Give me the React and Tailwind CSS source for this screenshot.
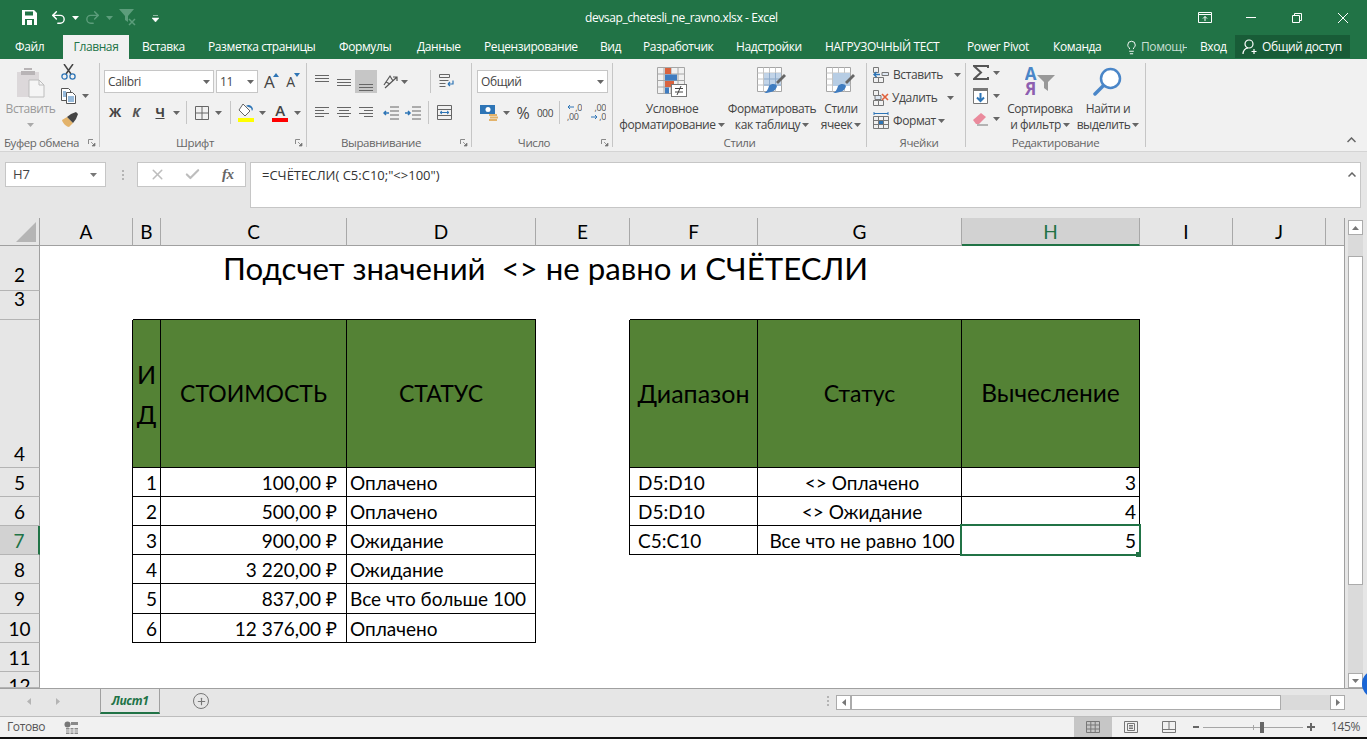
import React from "react";
import { Undo2, Redo2, Lightbulb, Check, X, Plus } from "lucide-react";

const COLS =
  "grid grid-cols-[40px_93px_28px_186px_189px_94px_128px_204px_178px_93px_93px_19px]";

const Caret = ({ className = "", color = "#666" }) => (
  <svg width="7" height="4" viewBox="0 0 7 4" className={"shrink-0 " + className}>
    <path d="M0 0h7L3.5 4z" fill={color} />
  </svg>
);

// horizontal text-alignment style icon
const Lines = ({ rows, w = 15 }) => (
  <svg width={w} height="14" viewBox={`0 0 ${w} 14`} className="shrink-0">
    {rows.map((r, i) => (
      <rect key={i} x={r[1]} y={r[0]} width={r[2]} height="1" fill="#666" />
    ))}
  </svg>
);

const Launcher = () => (
  <svg width="8" height="8" viewBox="0 0 8 8" className="absolute right-[3px] top-[4px]">
    <path d="M.5 5V.5H5" fill="none" stroke="#8a8a8a" />
    <path d="M3 3l3 3M7 4v3H4z" fill="#777" stroke="#777" strokeWidth=".7" />
  </svg>
);

const GroupLabel = ({ children, launcher, className = "" }) => (
  <div className="relative mt-auto -mb-1 h-4 shrink-0 text-center text-[11.5px] leading-4 text-[#666]">
    <div className={className}>{children}</div>
    {launcher && <Launcher />}
  </div>
);

const Sep = ({ className = "" }) => <div className={"w-px h-[23px] bg-[#c6c6c6] shrink-0 " + className} />;

const GridIcon = ({ children }) => (
  <svg width="30" height="30" viewBox="0 0 30 30" className="shrink-0">
    {children}
  </svg>
);

const PasteIcon = () => (
  <svg width="29" height="31" viewBox="0 0 29 31">
    <path d="M1 5h22v25H1z" fill="#dcd8da" />
    <path d="M8 3h8V1h-8zM5 4h14v4H5z" fill="#b8b4b6" />
    <path d="M13 13h10l5 5v12H13z" fill="#f5f5f5" stroke="#bdbdbd" />
    <path d="M23 13v5h5" fill="none" stroke="#bdbdbd" />
  </svg>
);

const ScissorsIcon = () => (
  <svg width="15" height="16" viewBox="0 0 15 16">
    <path d="M3 0l7 10M12 0L5 10" stroke="#444" strokeWidth="1.500" />
    <circle cx="3.500" cy="12.500" r="2.600" fill="none" stroke="#2e75b6" strokeWidth="1.300" />
    <circle cx="11.500" cy="12.500" r="2.600" fill="none" stroke="#2e75b6" strokeWidth="1.300" />
  </svg>
);

const CopyIcon = () => (
  <svg width="16" height="16" viewBox="0 0 16 16">
    <path d="M.5.5h7l2 2v10h-9z" fill="#fff" stroke="#555" />
    <path d="M5.500 4.500h6l3 3v8h-9z" fill="#fff" stroke="#555" />
    <path d="M7 9h6M7 11h6M7 13h6M2 4h3M2 6h3M2 8h3" stroke="#2e75b6" />
  </svg>
);

const BrushIcon = () => (
  <svg width="17" height="15" viewBox="0 0 17 15">
    <path d="M1 8l5-3 6 6-4 4c-2 0-6-3-7-7z" fill="#e3b36b" />
    <path d="M6 5l4-3 5-2 2 2-2 5-3 4z" fill="#444" />
  </svg>
);

const FillIcon = () => (
  <svg width="16" height="19" viewBox="0 0 16 19">
    <path d="M5 1l7 7-5 5-6-6z" fill="#fff" stroke="#666" />
    <path d="M8 3c2-2 6-1 7 3l-1 2-1-3z" fill="#2e75b6" />
    <rect x="0" y="15" width="16" height="4" fill="#ffff00" />
  </svg>
);

const BordersIcon = () => (
  <svg width="14" height="14" viewBox="0 0 14 14">
    <path d="M.5.5h13v13H.5zM7 .5v13M.5 7h13" fill="none" stroke="#666" />
  </svg>
);

const CondIcon = () => (
  <GridIcon>
    <path d="M.5.5h27v26H.5zM.5 7h27M.5 13.500h27M.5 20h27M7 .5v26M14 .5v26M21 .5v26" fill="none" stroke="#a6a6a6" />
    <rect x="8" y="1" width="6" height="6" fill="#d9633f" />
    <rect x="8" y="7.500" width="12" height="6" fill="#3f7cc0" />
    <rect x="8" y="14" width="9" height="6" fill="#d9633f" />
    <rect x="8" y="20.500" width="4" height="6" fill="#3f7cc0" />
    <rect x="14.500" y="17.500" width="15" height="12" fill="#fff" stroke="#777" />
    <path d="M18 21.500h8M18 25h8M24 19l-4 9" stroke="#444" />
  </GridIcon>
);

const TableIcon = ({ full }) => (
  <GridIcon>
    <path d="M.5.5h24v24H.5z" fill="#fff" stroke="#a6a6a6" />
    <path d="M.5 6h24M.5 12h24M.5 18h24M6.500.5v24M12.500.5v24M18.500.5v24" stroke="#c4c4c4" />
    {full ? (
      <rect x="7" y="6" width="17" height="13" fill="#b7cde4" />
    ) : (
      <>
        <rect x="7" y="6" width="17" height="13" fill="#b7cde4" opacity=".85" />
        <path d="M7 12h17M7 18h17M12.500 6v13M18.500 6v13" stroke="#8faccc" />
      </>
    )}
    <path d="M19 15l8-8 2 2-8 8z" fill="#666" />
    <path d="M12 19c3-3 7-2 8 0-1 5-6 7-13 7 3-1 4-4 5-7z" fill="#3f7cc0" />
  </GridIcon>
);

const InsertIcon = () => (
  <svg width="16" height="16" viewBox="0 0 16 16">
    <path d="M.5.5h5v5h-5zM.5 10.500h5v5h-5zM5.500 10.500h5v5h-5z" fill="none" stroke="#777" />
    <path d="M9 5.500h6.500v3H9z" fill="#dfe8f3" stroke="#777" />
    <path d="M1 7.500h6M3.500 5l-2.500 2.500L3.500 10" fill="none" stroke="#2e75b6" strokeWidth="1.500" />
  </svg>
);

const DeleteIcon = () => (
  <svg width="16" height="16" viewBox="0 0 16 16">
    <path d="M.5.5h5v5h-5zM.5 10.500h5v5h-5zM5.500 10.500h5v5h-5z" fill="none" stroke="#777" />
    <path d="M2 5.500h6v4H2z" fill="#dfe8f3" stroke="#777" />
    <path d="M9 4l6 6M15 4l-6 6" stroke="#e0603a" strokeWidth="1.600" />
  </svg>
);

const FormatIcon = () => (
  <svg width="16" height="17" viewBox="0 0 16 17">
    <path d="M.5 4.500h15v12H.5zM.5 8.500h15M.5 12.500h15M5.500 4.500v12M10.500 4.500v12" fill="none" stroke="#777" />
    <rect x="6" y="9" width="4" height="3" fill="#2e75b6" />
    <path d="M1 1.500h14M1 0v3M15 0v3" stroke="#2e75b6" />
  </svg>
);

const Row = ({ className = "", children }) => <div className={COLS + " " + className}>{children}</div>;

const RowHead = ({ n, sel, className = "" }) => (
  <div
    className={
      "flex justify-center border-b border-[#b4b4b4] " +
      (sel
        ? "bg-[#d2d2d2] text-[#217346] border-r-2 border-r-[#217346] "
        : "bg-[#e6e6e6] text-black border-r border-r-[#a0a0a0] ") +
      className
    }
  >
    {n}
  </div>
);

const leftRows = [
  ["1", "100,00 ₽", "Оплачено"],
  ["2", "500,00 ₽", "Оплачено"],
  ["3", "900,00 ₽", "Ожидание"],
  ["4", "3 220,00 ₽", "Ожидание"],
  ["5", "837,00 ₽", "Все что больше 100"],
  ["6", "12 376,00 ₽", "Оплачено"],
];

const rightRows = [
  ["D5:D10", "<> Оплачено", "3"],
  ["D5:D10", "<> Ожидание", "4"],
  ["C5:C10", "Все что не равно 100", "5"],
];

const colHeads = ["A", "B", "C", "D", "E", "F", "G", "H", "I", "J"];

const tabs = [
  ["Файл", "w-[63px] pl-[15px]"],
  ["Главная", "w-[66px] justify-center bg-[#f1f1f1] !text-[#217346]"],
  ["Вставка", "w-[79px] pl-[13px]"],
  ["Разметка страницы", "w-[131px]"],
  ["Формулы", "w-[78px]"],
  ["Данные", "w-[67px]"],
  ["Рецензирование", "w-[116px]"],
  ["Вид", "w-[43px]"],
  ["Разработчик", "w-[93px]"],
  ["Надстройки", "w-[89px]"],
  ["НАГРУЗОЧНЫЙ ТЕСТ", "w-[142px]"],
  ["Power Pivot", "w-[86px]"],
  ["Команда", "w-[70px]"],
];

const App = () => {
  return (
    <div className="relative flex h-[739px] w-[1367px] flex-col overflow-hidden bg-[#e6e6e6] font-['Open_Sans','Noto_Sans',sans-serif] text-[12px] tracking-[-0.4px]">
      {/* title bar */}
      <div className="flex h-[35px] shrink-0 items-center bg-[#217346] text-white">
        <div className="flex w-[585px] items-center pl-[22px]">
          <svg width="15" height="15" viewBox="0 0 15 15">
            <path d="M0 0h12l3 3v12H0z" fill="#fff" />
            <rect x="3" y="1.500" width="8" height="4" fill="#217346" />
            <rect x="3" y="9" width="9" height="6" fill="#217346" />
            <rect x="5" y="10" width="5" height="5" fill="#fff" />
          </svg>
          <Undo2 size={17} strokeWidth={2} className="ml-[13px]" />
          <Caret color="#fff" className="ml-[5px]" />
          <Redo2 size={17} strokeWidth={2} color="#5c9d7b" className="ml-[5px]" />
          <Caret color="#5c9d7b" className="ml-[5px]" />
          <svg width="18" height="18" viewBox="0 0 18 18" className="ml-[6px]">
            <path d="M0 0h15L9 7v6L6 11V7z" fill="#5c9d7b" />
            <path d="M10 10l6 6M16 10l-6 6" stroke="#5c9d7b" strokeWidth="1.500" />
          </svg>
          <svg width="7" height="7" viewBox="0 0 7 7" className="ml-[15px] mt-[2px]">
            <path d="M1 .5h5M0 3h7L3.500 7z" fill="#fff" stroke="#fff" strokeWidth=".5" />
          </svg>
        </div>
        <div className="whitespace-nowrap">devsap_chetesli_ne_ravno.xlsx - Excel</div>
        <div className="ml-auto flex items-center pr-[19px]">
          <svg width="14" height="11" viewBox="0 0 14 11">
            <path d="M.5 2.500h13v8H.5zM.5.5h13v2H.5zM7 9V4.500M5 6.500l2-2 2 2" fill="none" stroke="#fff" />
          </svg>
          <div className="ml-[34px] h-px w-[10px] bg-white" />
          <svg width="10" height="10" viewBox="0 0 10 10" className="ml-[36px]">
            <path d="M.5 2.500h7v7h-7zM2.500 2.500v-2h7v7h-2" fill="none" stroke="#fff" />
          </svg>
          <svg width="10" height="10" viewBox="0 0 10 10" className="ml-[36px]">
            <path d="M0 0l10 10M10 0L0 10" stroke="#fff" />
          </svg>
        </div>
      </div>

      {/* tabs */}
      <div className="flex h-[24px] shrink-0 items-stretch bg-[#217346] text-white">
        {tabs.map(([label, cls]) => (
          <div key={label} className={"flex items-center whitespace-nowrap " + cls}>
            {label}
          </div>
        ))}
        <div className="flex w-[64px] items-center overflow-hidden">
          <Lightbulb size={15} strokeWidth={1.5} className="ml-[1px] shrink-0" />
          <span className="ml-[2px] whitespace-nowrap text-[#c8dfd3]">Помощник</span>
        </div>
        <div className="ml-[13px] flex w-[34px] items-center whitespace-nowrap">Вход</div>
        <div className="ml-[1px] flex h-[23px] w-[115px] items-center bg-[#185c37] pl-[7px]">
          <svg width="16" height="16" viewBox="0 0 16 16" className="shrink-0">
            <circle cx="7" cy="5" r="4" fill="none" stroke="#fff" strokeWidth="1.200" />
            <path d="M1 15c0-3 2-6 5-6M12 10v5M9.500 12.500h5" fill="none" stroke="#fff" strokeWidth="1.200" />
          </svg>
          <span className="ml-[4px] whitespace-nowrap">Общий доступ</span>
        </div>
      </div>

      {/* ribbon */}
      <div className="flex h-[93px] shrink-0 items-start border-b border-[#d4d4d4] bg-[#f1f1f1] pt-[4px] text-[#444]">
        {/* clipboard */}
        <div className="flex h-[84px] w-[100px] shrink-0 flex-col border-r border-[#c6c6c6]">
          <div className="flex">
            <div className="flex w-[61px] flex-col items-center pt-[4px] text-[#9a9a9a]">
              <PasteIcon />
              <div className="mt-[2px] leading-[17px]">Вставить</div>
              <Caret color="#aaa" className="mt-[6px]" />
            </div>
            <div className="flex flex-col pt-[1px]">
              <ScissorsIcon />
              <div className="mt-[8px] flex items-center">
                <CopyIcon />
                <Caret className="ml-[5px]" />
              </div>
              <div className="mt-[8px]">
                <BrushIcon />
              </div>
            </div>
          </div>
          <GroupLabel launcher className="pr-[16px]">
            Буфер обмена
          </GroupLabel>
        </div>

        {/* font */}
        <div className="flex h-[84px] w-[207px] shrink-0 flex-col border-r border-[#c6c6c6] pl-[4px] pt-[7px]">
          <div className="flex h-[23px] items-center">
            <div className="flex h-[23px] w-[110px] items-center justify-between border border-[#c6c6c6] bg-white pl-[3px] pr-[3px]">
              <span>Calibri</span>
              <Caret />
            </div>
            <div className="ml-[2px] flex h-[23px] w-[42px] items-center justify-between border border-[#c6c6c6] bg-white pl-[3px] pr-[3px]">
              <span>11</span>
              <Caret />
            </div>
            <div className="relative ml-[6px] text-[17px] leading-none">
              А
              <svg width="6" height="4" viewBox="0 0 6 4" className="absolute -right-[5px] top-0">
                <path d="M0 4l3-4 3 4z" fill="#2e75b6" />
              </svg>
            </div>
            <div className="relative ml-[12px] text-[14px] leading-none">
              А
              <svg width="6" height="4" viewBox="0 0 6 4" className="absolute -right-[5px] -top-[2px]">
                <path d="M0 0l3 4 3-4z" fill="#2e75b6" />
              </svg>
            </div>
          </div>
          <div className="mt-[8px] flex h-[23px] items-center">
            <div className="w-[22px] text-center text-[13px] font-bold">Ж</div>
            <div className="w-[20px] text-center text-[13px] font-bold italic text-[#555]">К</div>
            <div className="ml-[2px] w-[24px] text-center text-[13px] font-bold underline">Ч</div>
            <Caret className="ml-[1px]" />
            <Sep className="ml-[6px]" />
            <div className="ml-[8px]">
              <BordersIcon />
            </div>
            <Caret className="ml-[6px]" />
            <Sep className="ml-[8px]" />
            <div className="ml-[7px]">
              <FillIcon />
            </div>
            <Caret className="ml-[5px]" />
            <div className="relative ml-[6px] h-[19px] w-[16px] text-center text-[15px] font-semibold leading-[15px]">
              А
              <div className="absolute bottom-0 h-[4px] w-[16px] bg-[#ff0000]" />
            </div>
            <Caret className="ml-[6px]" />
          </div>
          <GroupLabel launcher className="pr-[20px]">
            Шрифт
          </GroupLabel>
        </div>

        {/* alignment */}
        <div className="flex h-[84px] w-[165px] shrink-0 flex-col border-r border-[#c6c6c6] pt-[7px]">
          <div className="flex h-[23px] items-center">
            <div className="ml-[8px]">
              <Lines rows={[[0, 0, 14], [3, 0, 14], [6, 0, 14]]} />
            </div>
            <div className="ml-[7px]">
              <Lines rows={[[4, 0, 14], [7, 0, 14], [10, 0, 14]]} />
            </div>
            <div className="ml-[3px] flex h-[23px] w-[22px] items-end justify-center bg-[#c6c6c6] pb-[1px]">
              <Lines rows={[[6, 0, 14], [9, 0, 14], [12, 0, 14]]} />
            </div>
            <svg width="15" height="15" viewBox="0 0 15 15" className="ml-[6px]">
              <path d="M1 11L7 2l3 5M3 8l4 2M2 14L14 3M10 3h4v4" fill="none" stroke="#555" strokeWidth="1.200" />
            </svg>
            <Caret className="ml-[3px]" />
            <Sep className="ml-[22px]" />
            <svg width="15" height="15" viewBox="0 0 15 15" className="ml-[8px]">
              <path d="M.5.5h10v3H.5zM.5 6.500h9M.5 9.500h6M.5 12.500h6" fill="none" stroke="#666" />
              <path d="M9 10h5V6.500M9 10l2-2M9 10l2 2" fill="none" stroke="#2e75b6" strokeWidth="1.200" />
            </svg>
          </div>
          <div className="mt-[8px] flex h-[23px] items-center">
            <div className="ml-[8px]">
              <Lines rows={[[1, 0, 14], [4, 0, 9], [7, 0, 14], [10, 0, 9]]} />
            </div>
            <div className="ml-[7px]">
              <Lines rows={[[1, 0, 14], [4, 2, 10], [7, 0, 14], [10, 2, 10]]} />
            </div>
            <div className="ml-[7px]">
              <Lines rows={[[1, 0, 14], [4, 5, 9], [7, 0, 14], [10, 5, 9]]} />
            </div>
            <svg width="16" height="14" viewBox="0 0 16 14" className="ml-[9px]">
              <path d="M7 1h9M7 5h9M7 9h9M7 13h9" stroke="#666" />
              <path d="M6 5H1M3 3L1 5l2 2" transform="translate(0 2)" fill="none" stroke="#2e75b6" strokeWidth="1.500" />
            </svg>
            <svg width="16" height="14" viewBox="0 0 16 14" className="ml-[6px]">
              <path d="M7 1h9M7 5h9M7 9h9M7 13h9" stroke="#666" />
              <path d="M0 5h5M3 3l2 2-2 2" transform="translate(0 2)" fill="none" stroke="#2e75b6" strokeWidth="1.500" />
            </svg>
            <Sep className="ml-[7px]" />
            <svg width="15" height="15" viewBox="0 0 15 15" className="ml-[8px]">
              <path d="M.5.5h14v14H.5zM.5 4.500h14M.5 10.500h14" fill="none" stroke="#666" />
              <path d="M3 7.500h9M3 7.500l2-1.500M3 7.500l2 1.500M12 7.500l-2-1.500M12 7.500l-2 1.500" fill="none" stroke="#2e75b6" />
            </svg>
          </div>
          <GroupLabel launcher className="pr-[16px]">
            Выравнивание
          </GroupLabel>
        </div>

        {/* number */}
        <div className="flex h-[84px] w-[141px] shrink-0 flex-col border-r border-[#c6c6c6] pt-[7px]">
          <div className="ml-[5px] flex h-[23px] w-[131px] items-center justify-between border border-[#c6c6c6] bg-white pl-[3px] pr-[3px]">
            <span>Общий</span>
            <Caret />
          </div>
          <div className="mt-[8px] flex h-[23px] items-center">
            <svg width="18" height="17" viewBox="0 0 18 17" className="ml-[8px]">
              <rect x="0" y="1" width="15" height="9" fill="#2e75b6" />
              <circle cx="8" cy="5.500" r="2.500" fill="#fff" />
              <rect x="9" y="10" width="8" height="2" fill="#e3b36b" />
              <rect x="10" y="12.500" width="8" height="2" fill="#e3b36b" />
              <rect x="9" y="15" width="8" height="2" fill="#e3b36b" />
            </svg>
            <Caret className="ml-[5px]" />
            <div className="ml-[6px] w-[14px] text-center text-[16px] leading-none">%</div>
            <div className="ml-[7px] w-[15px] text-center text-[10px] leading-none">000</div>
            <Sep className="ml-[7px]" />
            <svg width="15" height="19" viewBox="0 0 15 19" className="ml-[7px] text-[9px]" fill="#555">
              <path d="M7 4H1M3 2L1 4l2 2" fill="none" stroke="#2e75b6" />
              <text x="15" y="8" textAnchor="end">,0</text>
              <text x="0" y="17">,00</text>
            </svg>
            <svg width="15" height="19" viewBox="0 0 15 19" className="ml-[9px] text-[9px]" fill="#555">
              <text x="15" y="8" textAnchor="end">,00</text>
              <path d="M0 14h6M4 12l2 2-2 2" fill="none" stroke="#2e75b6" />
              <text x="15" y="17" textAnchor="end">,0</text>
            </svg>
          </div>
          <GroupLabel launcher className="pr-[16px]">
            Число
          </GroupLabel>
        </div>

        {/* styles */}
        <div className="flex h-[84px] w-[254px] shrink-0 flex-col border-r border-[#c6c6c6]">
          <div className="flex pt-[4px] leading-[16px]">
            <div className="ml-[5px] flex w-[108px] flex-col items-center">
              <CondIcon />
              <div className="mt-[4px]">Условное</div>
              <div className="flex items-center whitespace-nowrap">
                форматирование
                <Caret className="ml-[2px]" />
              </div>
            </div>
            <div className="flex w-[92px] flex-col items-center">
              <TableIcon />
              <div className="mt-[4px] whitespace-nowrap">Форматировать</div>
              <div className="flex items-center whitespace-nowrap">
                как таблицу
                <Caret className="ml-[2px]" />
              </div>
            </div>
            <div className="flex w-[46px] flex-col items-center">
              <TableIcon full />
              <div className="mt-[4px]">Стили</div>
              <div className="flex items-center whitespace-nowrap">
                ячеек
                <Caret className="ml-[2px]" />
              </div>
            </div>
          </div>
          <GroupLabel>Стили</GroupLabel>
        </div>

        {/* cells */}
        <div className="flex h-[84px] w-[99px] shrink-0 flex-col border-r border-[#c6c6c6] pl-[6px]">
          <div className="flex h-[23px] items-center">
            <InsertIcon />
            <span className="ml-[4px]">Вставить</span>
            <Caret className="ml-[11px]" />
          </div>
          <div className="flex h-[23px] items-center">
            <DeleteIcon />
            <span className="ml-[3px]">Удалить</span>
            <Caret className="ml-[10px]" />
          </div>
          <div className="flex h-[23px] items-center">
            <FormatIcon />
            <span className="ml-[4px]">Формат</span>
            <Caret className="ml-[2px]" />
          </div>
          <GroupLabel>Ячейки</GroupLabel>
        </div>

        {/* editing */}
        <div className="flex h-[84px] w-[180px] shrink-0 flex-col border-r border-[#c6c6c6]">
          <div className="flex">
            <div className="flex w-[35px] flex-col pl-[7px] pt-[2px]">
              <div className="flex items-center">
                <svg width="16" height="15" viewBox="0 0 16 15">
                  <path d="M15 3V1H1l7 6.500L1 14h14v-2" fill="none" stroke="#555" strokeWidth="2" />
                </svg>
                <Caret className="ml-[4px]" />
              </div>
              <div className="mt-[8px] flex items-center">
                <svg width="15" height="16" viewBox="0 0 15 16">
                  <path d="M.5.5h14v15H.5z" fill="#fff" stroke="#777" />
                  <rect x="0" y="0" width="15" height="3" fill="#777" />
                  <path d="M7.500 5v8M4 9.500l3.500 3.500L11 9.500" fill="none" stroke="#2e75b6" strokeWidth="2" />
                </svg>
                <Caret className="ml-[5px]" />
              </div>
              <div className="mt-[8px] flex items-center">
                <svg width="15" height="14" viewBox="0 0 15 14">
                  <path d="M0 8l8-7 5 4-7 7H3z" fill="#ea8a9c" />
                  <path d="M4 13h11" stroke="#777" />
                </svg>
                <Caret className="ml-[5px]" />
              </div>
            </div>
            <div className="flex w-[78px] flex-col items-center pt-[4px] leading-[16px]">
              <svg width="30" height="30" viewBox="0 0 30 30" className="text-[17px] font-bold">
                <text x="5.500" y="13" textAnchor="middle" fill="#4a86c8">А</text>
                <text x="5.500" y="28" textAnchor="middle" fill="#8e5fb0">Я</text>
                <path d="M12 8h18l-7 7v9l-4-3v-6z" fill="#999" />
              </svg>
              <div className="mt-[4px] whitespace-nowrap">Сортировка</div>
              <div className="flex items-center whitespace-nowrap">
                и фильтр
                <Caret className="ml-[2px]" />
              </div>
            </div>
            <div className="flex w-[58px] flex-col items-center pt-[4px] leading-[16px]">
              <svg width="30" height="30" viewBox="0 0 30 30">
                <circle cx="17.500" cy="11.500" r="9.500" fill="#fff" stroke="#4a86c8" strokeWidth="2.500" />
                <path d="M10 19L2 27" stroke="#4a86c8" strokeWidth="3.500" strokeLinecap="round" />
              </svg>
              <div className="mt-[4px] whitespace-nowrap">Найти и</div>
              <div className="flex items-center whitespace-nowrap">
                выделить
                <Caret className="ml-[2px]" />
              </div>
            </div>
          </div>
          <GroupLabel>Редактирование</GroupLabel>
        </div>

        <svg width="9" height="6" viewBox="0 0 9 6" className="ml-[201px] mt-[74px] shrink-0">
          <path d="M.5 5l4-4 4 4" fill="none" stroke="#666" strokeWidth="1.500" />
        </svg>
      </div>

      {/* formula bar */}
      <div className="flex h-[66px] shrink-0 items-start bg-[#e6e6e6] pt-[10px] text-[#444]">
        <div className="ml-[5px] flex h-[25px] w-[101px] items-center justify-between border border-[#c6c6c6] bg-white pl-[7px] pr-[8px] text-[13px] tracking-normal">
          <span>H7</span>
          <Caret color="#777" />
        </div>
        <div className="ml-[15px] flex h-[25px] w-[3px] flex-col items-center justify-center gap-[2px]">
          <div className="h-[2px] w-[2px] bg-[#b4b4b4]" />
          <div className="h-[2px] w-[2px] bg-[#b4b4b4]" />
          <div className="h-[2px] w-[2px] bg-[#b4b4b4]" />
        </div>
        <div className="ml-[13px] flex h-[25px] w-[109px] items-center border border-[#c6c6c6] bg-white">
          <X size={17} color="#bdbdbd" strokeWidth={2.2} className="ml-[11px]" />
          <Check size={17} color="#bdbdbd" strokeWidth={3} className="ml-[18px]" />
          <span className="ml-[21px] font-['Liberation_Serif',serif] text-[15px] font-bold italic text-[#666]">fx</span>
        </div>
        <div className="ml-[4px] flex h-[46px] w-[1111px] items-start justify-between border border-[#c6c6c6] bg-white pl-[11px] pr-[4px] pt-[3px]">
          <span className="whitespace-nowrap text-[13px] tracking-normal text-[#333]">=СЧЁТЕСЛИ( C5:C10;"&lt;&gt;100")</span>
          <svg width="8" height="5" viewBox="0 0 8 5" className="mt-[6px]">
            <path d="M.5 4.500l3.500-3.500 3.500 3.500" fill="none" stroke="#666" strokeWidth="1.500" />
          </svg>
        </div>
      </div>

      {/* sheet */}
      <div className="flex h-[470px] shrink-0">
        <div className="h-[470px] w-[1345px] shrink-0 overflow-hidden border-r border-[#a0a0a0] bg-white font-['Lato','Noto_Sans',sans-serif] text-[19px] tracking-normal text-black">
          <Row className="h-[28px] leading-[28px]">
            <div className="flex items-end justify-end border-b border-r border-[#a0a0a0] bg-[#e6e6e6] pb-[3px] pr-[3px]">
              <svg width="20" height="20" viewBox="0 0 20 20">
                <path d="M20 0v20H0z" fill="#b5b5b5" />
              </svg>
            </div>
            {colHeads.map((c) => (
              <div
                key={c}
                className={
                  "h-[28px] text-center border-r border-r-[#a8a8a8] " +
                  (c === "H"
                    ? "border-b-2 border-b-[#217346] bg-[#d2d2d2] text-[#217346]"
                    : "border-b border-b-[#a0a0a0] bg-[#e6e6e6]")
                }
              >
                {c}
              </div>
            ))}
            <div className="border-b border-[#a0a0a0] bg-[#e6e6e6]" />
          </Row>

          {/* row 2 */}
          <Row className="h-[45px]">
            <RowHead n="2" className="items-end pb-[1px]" />
            <div className="col-span-2" />
            <div className="col-span-5 whitespace-pre pl-[62px] text-[31.2px] leading-[44px]">
              Подсчет значений  &lt;&gt; не равно и СЧЁТЕСЛИ
            </div>
          </Row>

          {/* row 3 */}
          <Row className="h-[29px]">
            <RowHead n="3" className="items-start leading-[16px]" />
            <div />
            <div className="border-b border-black" />
            <div className="border-b border-black" />
            <div className="border-b border-black" />
            <div />
            <div className="border-b border-black" />
            <div className="border-b border-black" />
            <div className="border-b border-black" />
          </Row>

          {/* row 4: table heads */}
          <Row className="h-[148px] text-[23px]">
            <RowHead n="4" className="items-end text-[19px] leading-[27px]" />
            <div className="border-r border-black" />
            <div className="flex items-center justify-center border-b border-r border-black bg-[#548235] text-center text-[25px] leading-[40px]">
              <span className="w-[20px] break-all">ИД</span>
            </div>
            <div className="flex items-center justify-center border-b border-r border-black bg-[#548235]">СТОИМОСТЬ</div>
            <div className="flex items-center justify-center border-b border-r border-black bg-[#548235]">СТАТУС</div>
            <div className="border-r border-black" />
            <div className="flex items-center justify-center border-b border-r border-black bg-[#548235] text-[25px]">Диапазон</div>
            <div className="flex items-center justify-center border-b border-r border-black bg-[#548235]">Статус</div>
            <div className="flex items-center justify-center border-b border-r border-black bg-[#548235] text-[24.5px]">Вычесление</div>
          </Row>

          {/* rows 5-10 */}
          {leftRows.map((r, i) => {
            const right = rightRows[i];
            return (
              <Row key={r[0]} className={i === 4 ? "h-[30px] leading-[28px]" : "h-[29px] leading-[27px]"}>
                <RowHead n={String(i + 5)} sel={i === 2} className="pt-px" />
                <div className="border-r border-black" />
                <div className="border-b border-r border-black pr-[3px] pt-px text-right">{r[0]}</div>
                <div className="whitespace-pre border-b border-r border-black pr-[9px] pt-px text-right">{r[1]}</div>
                <div className="whitespace-nowrap border-b border-r border-black pl-[3px] pt-px">{r[2]}</div>
                <div className={right ? "border-r border-black" : ""} />
                {right && (
                  <>
                    <div className="border-b border-r border-black pl-[8px] pt-px">{right[0]}</div>
                    <div className="whitespace-nowrap border-b border-r border-black pl-[5px] pt-px text-center">{right[1]}</div>
                    <div className="relative border-b border-r border-black pr-[3px] pt-px text-right">
                      {right[2]}
                      {i === 2 && (
                        <>
                          <div className="absolute -bottom-[2px] -left-[2px] -right-[2px] -top-[2px] border-2 border-[#217346]" />
                          <div className="absolute -bottom-[3px] -right-[2px] h-[5px] w-[5px] bg-[#217346]" />
                        </>
                      )}
                    </div>
                  </>
                )}
              </Row>
            );
          })}

          <Row className="h-[29px] leading-[27px]">
            <RowHead n="11" className="pt-px" />
          </Row>
          <Row className="h-[16px] leading-[28px]">
            <RowHead n="12" className="overflow-hidden" />
          </Row>
        </div>

        {/* vertical scrollbar */}
        <div className="flex w-[22px] shrink-0 flex-col items-center bg-[#e6e6e6] pr-[1px] pt-[2px]">
          <div className="flex h-[15px] w-[15px] shrink-0 items-center justify-center border border-[#ababab] bg-white">
            <svg width="7" height="4" viewBox="0 0 7 4">
              <path d="M0 4h7L3.500 0z" fill="#777" />
            </svg>
          </div>
          <div className="flex w-[15px] flex-1 flex-col bg-[#dadada]">
            <div className="mt-[21px] h-[329px] border border-[#ababab] bg-white" />
          </div>
          <div className="flex h-[15px] w-[15px] shrink-0 items-center justify-center border border-[#ababab] bg-white">
            <Caret color="#777" />
          </div>
        </div>
      </div>

      {/* sheet tabs */}
      <div className="flex h-[29px] shrink-0 border-b border-t border-b-[#bdbdbd] border-t-[#a0a0a0] bg-[#e6e6e6]">
        <div className="flex w-[100px] items-center pb-[3px]">
          <svg width="4" height="7" viewBox="0 0 4 7" className="ml-[27px]">
            <path d="M4 0v7L0 3.500z" fill="#b4b4b4" />
          </svg>
          <svg width="4" height="7" viewBox="0 0 4 7" className="ml-[25px]">
            <path d="M0 0v7l4-3.500z" fill="#b4b4b4" />
          </svg>
        </div>
        <div className="flex h-[25px] w-[60px] items-center justify-center border-x border-b-2 border-x-[#a0a0a0] border-b-[#217346] text-[12px] font-bold italic text-[#217346]">
          Лист1
        </div>
        <div className="flex w-[660px] items-center pb-[3px]">
          <div className="ml-[33px] flex h-[16px] w-[16px] items-center justify-center rounded-full border border-[#777]">
            <Plus size={11} color="#777" strokeWidth={2.5} />
          </div>
        </div>
        <div className="flex items-start pt-[6px]">
          <div className="flex h-[14px] w-[16px] flex-col items-center gap-[2px] pt-[1px]">
            <div className="h-[2px] w-[2px] bg-[#b4b4b4]" />
            <div className="h-[2px] w-[2px] bg-[#b4b4b4]" />
            <div className="h-[2px] w-[2px] bg-[#b4b4b4]" />
          </div>
          <div className="flex h-[15px] w-[15px] items-center justify-center border border-[#ababab] bg-white">
            <svg width="4" height="7" viewBox="0 0 4 7">
              <path d="M4 0v7L0 3.500z" fill="#777" />
            </svg>
          </div>
          <div className="h-[15px] w-[430px] border border-[#ababab] bg-white" />
          <div className="h-[15px] w-[49px] bg-[#dadada]" />
          <div className="flex h-[15px] w-[15px] items-center justify-center border border-[#ababab] bg-white">
            <svg width="4" height="7" viewBox="0 0 4 7">
              <path d="M0 0v7l4-3.500z" fill="#777" />
            </svg>
          </div>
        </div>
      </div>

      {/* status bar */}
      <div className="flex h-[20px] shrink-0 items-center bg-[#f1f1f1] text-[#555]">
        <span className="ml-[7px] w-[37px]">Готово</span>
        <svg width="14" height="13" viewBox="0 0 14 13" className="ml-[20px]">
          <circle cx="3.500" cy="3.500" r="3" fill="#777" />
          <path d="M7 1h7v3H7zM2 7h12v6H2z" fill="#8a8a8a" />
          <path d="M2 9h12M2 11h12M6 7v6M10 7v6" stroke="#f1f1f1" />
        </svg>
        <div className="ml-[996px] flex h-[20px] w-[38px] items-center justify-center bg-[#c6c6c6]">
          <svg width="14" height="12" viewBox="0 0 14 12">
            <path d="M.5.5h13v11H.5zM.5 4h13M.5 8h13M4.800.5v11M9.200.5v11" fill="none" stroke="#777" />
          </svg>
        </div>
        <svg width="14" height="12" viewBox="0 0 14 12" className="ml-[12px]">
          <path d="M.5.5h13v11H.5zM3.500 2.500h7v7h-7zM5 4.500h4M5 6h4M5 7.500h4" fill="none" stroke="#777" />
        </svg>
        <svg width="14" height="12" viewBox="0 0 14 12" className="ml-[24px]">
          <path d="M.5 11.500V.5h13v11zM.5 8.500h13M7 .5v8" fill="none" stroke="#777" />
        </svg>
        <div className="ml-[17px] h-[2px] w-[6px] bg-[#666]" />
        <div className="relative ml-[4px] h-px w-[100px] bg-[#a6a6a6]">
          <div className="absolute left-[50px] -top-[2px] h-[5px] w-px bg-[#a6a6a6]" />
          <div className="absolute left-[57px] -top-[5px] h-[11px] w-[4px] bg-[#666]" />
        </div>
        <svg width="8" height="8" viewBox="0 0 8 8" className="ml-[4px]">
          <path d="M0 4h8M4 0v8" stroke="#666" strokeWidth="2" />
        </svg>
        <span className="ml-[16px] whitespace-nowrap">145%</span>
      </div>
      <div className="h-[2px] shrink-0 bg-[#111]" />

      {/* screen recorder blob at the edge */}
      <div className="absolute left-[1362px] top-[670px] h-[28px] w-[28px] rounded-full bg-[#1a66d6]" />
    </div>
  );
};

export default App;
